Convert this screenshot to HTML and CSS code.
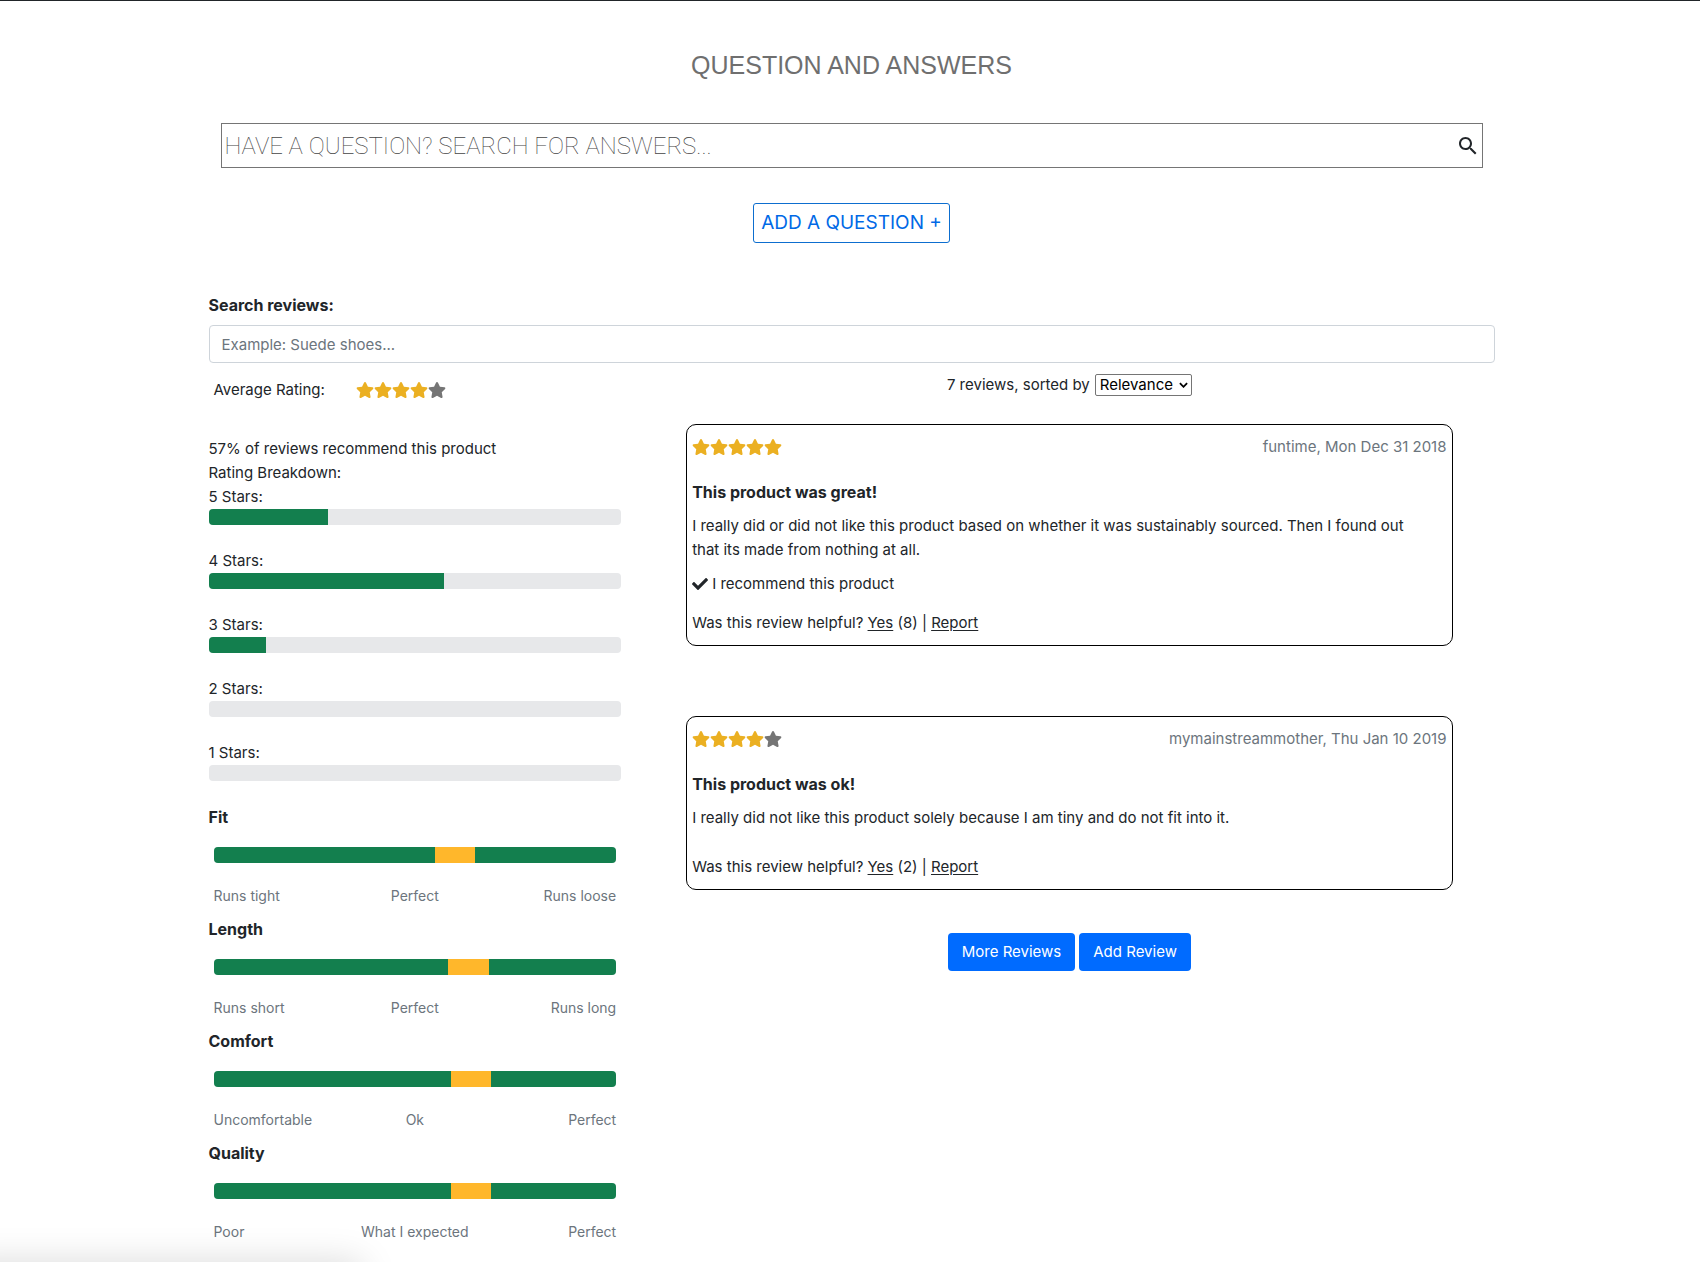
FILE: index.html
```html
<!DOCTYPE html>
<html lang="en">
<head>
<meta charset="utf-8">
<meta name="viewport" content="width=device-width, initial-scale=1">
<title>Questions and Reviews</title>
<link rel="stylesheet" href="styles.css">
</head>
<body>
<svg class="defs" aria-hidden="true">
  <symbol id="star" viewBox="0 0 576 512"><path d="M259.3 17.8L194 150.2 47.9 171.5c-26.2 3.8-36.7 36.1-17.7 54.6l105.7 103-25 145.5c-4.5 26.3 23.2 46 46.4 33.7L288 439.6l130.7 68.7c23.2 12.2 50.9-7.4 46.4-33.7l-25-145.5 105.7-103c19-18.5 8.5-50.8-17.7-54.6L382 150.2 316.7 17.8c-11.7-23.6-45.6-23.9-57.4 0z"/></symbol>
</svg>
<main class="page">
  <section class="questions">
    <h2 class="questions-title">QUESTION AND ANSWERS</h2>
    <form class="question-search">
      <input class="question-input" type="text" aria-label="Search questions" placeholder="HAVE A QUESTION? SEARCH FOR ANSWERS...">
      <svg class="search-icon" viewBox="0 0 24 24" aria-hidden="true"><path d="M15.5 14h-.79l-.28-.27C15.41 12.59 16 11.11 16 9.5 16 5.91 13.09 3 9.5 3S3 5.91 3 9.5 5.91 16 9.5 16c1.61 0 3.09-.59 4.23-1.57l.27.28v.79l5 4.99L20.49 19l-4.99-5zm-6 0C7.01 14 5 11.99 5 9.5S7.01 5 9.5 5 14 7.01 14 9.5 11.99 14 9.5 14z"/></svg>
    </form>
    <button class="add-question" type="button">ADD A QUESTION +</button>
  </section>

  <section class="reviews">
    <label class="review-label" for="review-search">Search reviews:</label>
    <input class="review-input" id="review-search" type="text" placeholder="Example: Suede shoes...">

    <div class="columns">
      <div class="summary">
        <div class="average">
          <span>Average Rating:</span>
          <span class="stars" role="img" aria-label="4 out of 5 stars"><svg class="star"><use href="#star"/></svg><svg class="star"><use href="#star"/></svg><svg class="star"><use href="#star"/></svg><svg class="star"><use href="#star"/></svg><svg class="star star-off"><use href="#star"/></svg></span>
        </div>
        <div>57% of reviews recommend this product</div>
        <div>Rating Breakdown:</div>
        <div class="breakdown">
          <div>5 Stars:<div class="bar"><div class="fill" style="width:29%"></div></div></div>
          <div>4 Stars:<div class="bar"><div class="fill" style="width:57%"></div></div></div>
          <div>3 Stars:<div class="bar"><div class="fill" style="width:14%"></div></div></div>
          <div>2 Stars:<div class="bar"></div></div>
          <div>1 Stars:<div class="bar"></div></div>
        </div>
        <div class="traits">
          <div class="trait">
            <h3 class="trait-title">Fit</h3>
            <div class="trait-bar"><div class="fill" style="width:55%"></div><div class="marker"></div><div class="rest"></div></div>
            <div class="scale"><span>Runs tight</span><span>Perfect</span><span>Runs loose</span></div>
          </div>
          <div class="trait">
            <h3 class="trait-title">Length</h3>
            <div class="trait-bar"><div class="fill" style="width:58.3%"></div><div class="marker"></div><div class="rest"></div></div>
            <div class="scale"><span>Runs short</span><span>Perfect</span><span>Runs long</span></div>
          </div>
          <div class="trait">
            <h3 class="trait-title">Comfort</h3>
            <div class="trait-bar"><div class="fill" style="width:59%"></div><div class="marker"></div><div class="rest"></div></div>
            <div class="scale"><span>Uncomfortable</span><span>Ok</span><span>Perfect</span></div>
          </div>
          <div class="trait">
            <h3 class="trait-title">Quality</h3>
            <div class="trait-bar"><div class="fill" style="width:59%"></div><div class="marker"></div><div class="rest"></div></div>
            <div class="scale"><span>Poor</span><span>What I expected</span><span>Perfect</span></div>
          </div>
        </div>
      </div>

      <div class="list">
        <div class="sort">
          <label for="sort">7 reviews, sorted by</label>
          <span class="select-wrap">
            <select class="select" id="sort"><option>Relevance</option><option>Newest</option><option>Helpful</option></select>
            <svg class="chevron" viewBox="0 0 10 6" aria-hidden="true"><path d="M1 1l4 4 4-4"/></svg>
          </span>
        </div>

        <article class="card">
          <header class="card-head">
            <span class="stars" role="img" aria-label="5 out of 5 stars"><svg class="star"><use href="#star"/></svg><svg class="star"><use href="#star"/></svg><svg class="star"><use href="#star"/></svg><svg class="star"><use href="#star"/></svg><svg class="star"><use href="#star"/></svg></span>
            <span class="byline">funtime, Mon Dec 31 2018</span>
          </header>
          <h3 class="card-title">This product was great!</h3>
          <p class="card-text">I really did or did not like this product based on whether it was sustainably sourced. Then I found out that its made from nothing at all.</p>
          <p class="recommend"><svg class="check" viewBox="0 0 512 512" aria-hidden="true"><path d="M173.9 439.4l-166.4-166.4c-10-10-10-26.2 0-36.2l36.2-36.2c10-10 26.2-10 36.2 0L192 312.7 432.1 72.6c10-10 26.2-10 36.2 0l36.2 36.2c10 10 10 26.2 0 36.2l-294.4 294.4c-10 10-26.2 10-36.2 0z"/></svg>I recommend this product</p>
          <p class="helpful">Was this review helpful? <a href="#yes">Yes</a> (8) | <a href="#report">Report</a></p>
        </article>

        <article class="card">
          <header class="card-head">
            <span class="stars" role="img" aria-label="4 out of 5 stars"><svg class="star"><use href="#star"/></svg><svg class="star"><use href="#star"/></svg><svg class="star"><use href="#star"/></svg><svg class="star"><use href="#star"/></svg><svg class="star star-off"><use href="#star"/></svg></span>
            <span class="byline">mymainstreammother, Thu Jan 10 2019</span>
          </header>
          <h3 class="card-title">This product was ok!</h3>
          <p class="card-text">I really did not like this product solely because I am tiny and do not fit into it.</p>
          <p class="helpful helpful-far">Was this review helpful? <a href="#yes">Yes</a> (2) | <a href="#report">Report</a></p>
        </article>

        <div class="actions">
          <button class="btn" type="button">More Reviews</button>
          <button class="btn" type="button">Add Review</button>
        </div>
      </div>
    </div>
  </section>
</main>
<div class="corner-shadow"></div>
</body>
</html>
```
FILE: styles.css
```css
* { box-sizing: border-box; }
body {
  margin: 0;
  padding-left: 3px;
  border-top: 1px solid #212529;
  background: #fff;
  color: #212529;
  font: 15px/24px Inter, "Liberation Sans", sans-serif;
}
h2, h3, p { margin: 0; }
button, input, select { font: inherit; color: inherit; margin: 0; }
.defs { display: none; }
.page { max-width: 1286px; margin: 0 auto; }

.questions { display: flex; flex-direction: column; align-items: center; padding: 48px 12px 0; }
.questions-title { font: 400 25px/32px "Liberation Sans", Arial, sans-serif; color: #6f6f6f; }
.question-search {
  display: flex; align-items: center; align-self: stretch;
  height: 45px; margin-top: 42px; padding: 0 2px 0 3px;
  border: 1px solid #757575;
}
.question-input { flex: 1; min-width: 0; padding: 0; border: 0; outline: 0; background: none; font-family: Roboto, Inter, sans-serif; font-size: 24px; font-weight: 100; line-height: 32px; }
.question-input::placeholder { color: #444; opacity: 1; }
.search-icon { width: 24px; height: 24px; fill: #212529; }
.add-question {
  height: 40px; margin-top: 35px; padding: 0 7px;
  border: 1px solid #0d6ecf; border-radius: 3px; background: #fff;
  color: #0069e6; font-size: 19px; line-height: 24px;
}

.reviews { padding-top: 50px; }
.review-label { display: block; font-size: 16px; font-weight: 700; }
.review-input { display: block; width: 100%; height: 38px; margin-top: 8px; padding: 0 12px; border: 1px solid #ced4da; border-radius: 4px; background: #fff; }
.review-input::placeholder { color: #6c757d; opacity: 1; }

.columns { display: grid; grid-template-columns: 1fr 2fr; }
.summary { padding: 15px 16px 0 0; }
.average { display: flex; gap: 31px; padding-left: 5px; margin-bottom: 35px; }
.stars { display: inline-flex; align-items: center; height: 24px; }
.star { width: 18px; height: 16px; fill: #ebb022; }
.star-off { fill: #757575; }
.breakdown { display: flex; flex-direction: column; gap: 24px; }
.bar, .trait-bar { display: flex; height: 16px; border-radius: 4px; background: #e7e8ea; overflow: hidden; }
.fill, .rest { background: #137f4e; }
.rest { flex: 1; }
.marker { width: 10%; background: #ffb72b; }
.traits { display: flex; flex-direction: column; gap: 10px; padding-top: 24px; }
.trait-title { font-size: 16px; font-weight: 700; line-height: 24px; }
.trait-bar { margin: 18px 5px 22px; }
.scale { display: grid; grid-template-columns: 1fr 1fr 1fr; padding: 0 5px; color: #6c757d; font-size: 14px; line-height: 22px; white-space: nowrap; }
.scale > :nth-child(2) { text-align: center; }
.scale > :nth-child(3) { text-align: right; }

.list { padding: 10px 42px 0 49px; }
.sort { display: flex; justify-content: center; align-items: center; gap: 5px; margin-bottom: 27px; }
.select-wrap { position: relative; display: flex; }
.select { height: 22px; width: 97px; padding: 0 4px; border: 1px solid #757575; border-radius: 2px; background: #fff; color: #000; line-height: 20px; appearance: none; }
.chevron { position: absolute; right: 4px; top: 8px; width: 9px; height: 6px; fill: none; stroke: #000; stroke-width: 2; }
.card { padding: 10px 5px; border: 1px solid #000; border-radius: 10px; }
.card + .card { margin-top: 70px; }
.card-head { display: flex; justify-content: space-between; margin-bottom: 21px; }
.byline { color: #6c757d; }
.card-title { margin-bottom: 10px; font-size: 16px; font-weight: 700; line-height: 24px; }
.card-text { padding-right: 24px; }
.recommend { display: flex; align-items: center; gap: 4px; margin-top: 10px; }
.check { width: 16px; height: 16px; fill: #212529; }
.helpful { margin-top: 15px; }
.helpful-far { margin-top: 25px; }
.helpful a { color: inherit; text-decoration: underline; text-underline-offset: 2px; }
.actions { display: flex; justify-content: center; gap: 4px; margin-top: 43px; }
.btn { height: 38px; padding: 0 14px; border: 0; border-radius: 4px; background: #006bff; color: #fff; }

/* soft shade rising from below the lower left corner */
.corner-shadow { position: fixed; left: -40px; top: 100%; width: 402px; height: 40px; box-shadow: 0 0 36px rgba(0, 0, 0, .15); pointer-events: none; }
```
